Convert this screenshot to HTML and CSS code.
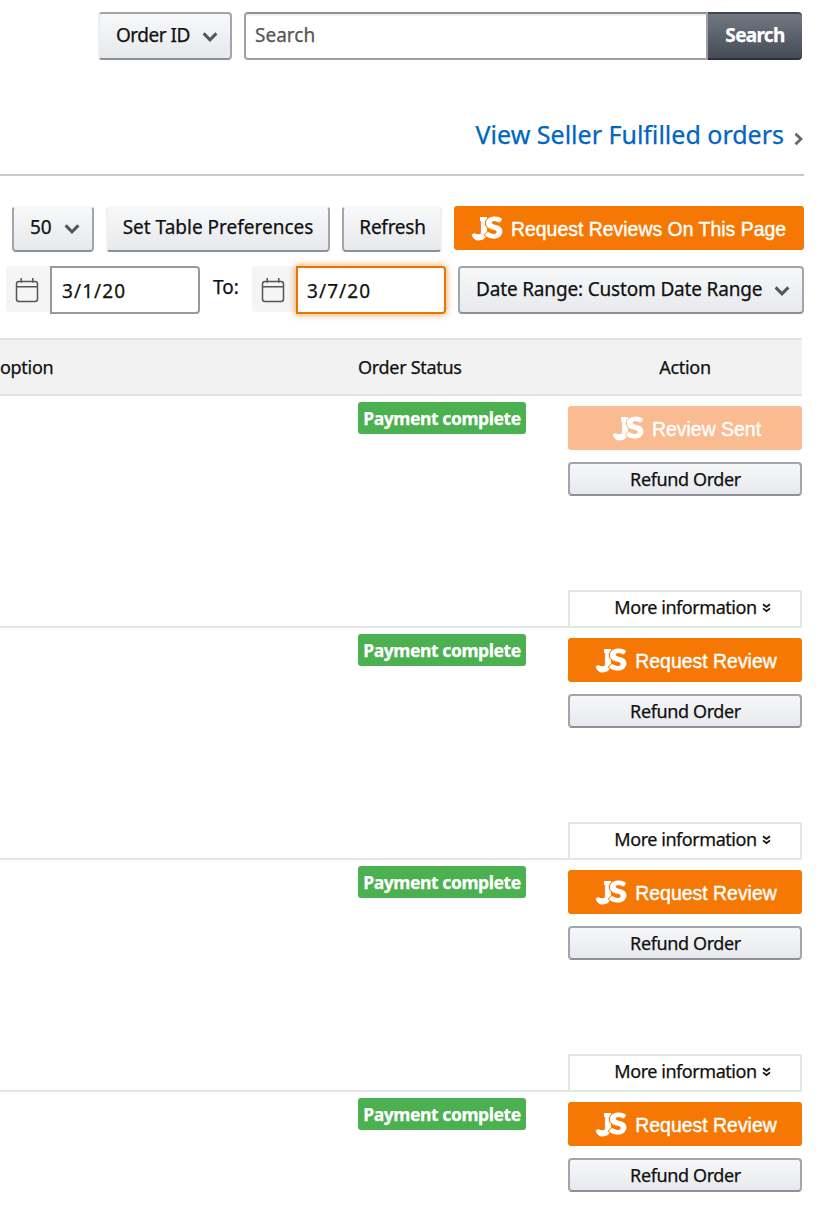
FILE: index.html
```html
<!DOCTYPE html>
<html lang="en">
<head>
<meta charset="utf-8">
<title>Manage Orders</title>
<link rel="stylesheet" href="styles.css">
</head>
<body>
<svg class="defs" width="0" height="0" aria-hidden="true">
  <symbol id="chevron" viewBox="0 0 16 12"><path d="M1.6 2.4 8 8.8l6.4-6.4" fill="none" stroke="#555" stroke-width="3"/></symbol>
  <symbol id="calendar" viewBox="0 0 24 26"><path d="M4 4.5h16q2.500 0 2.500 2.500v15q0 2.500-2.500 2.500H4q-2.500 0-2.500-2.500V7Q1.500 4.500 4 4.500zM1.500 9.700h21M6.200 1v4.800M17.800 1v4.800" fill="none" stroke="#555" stroke-width="1.500"/></symbol>
  <symbol id="tail" viewBox="0 0 32 26"><path d="M9 1h7v4H9zM.5 18.500l3-1.500q3 2.500 6.500.8l5.500.2q-1.500 6.500-8 6.500-5 0-7-6z" fill="#fff"/></symbol>
</svg>
<main class="page">
  <form class="search">
    <button type="button" class="btn btn-type"><span class="t-type">Order ID</span><svg class="chev"><use href="#chevron"/></svg></button>
    <div class="search-box"><div class="search-input"><span class="t-input">Search</span></div><button type="button" class="search-go"><span class="t-go">Search</span></button></div>
  </form>
  <div class="link-row"><a class="t-link">View Seller Fulfilled orders</a><svg class="arrow" viewBox="0 0 10 14"><path d="M1.500 1.800 7 7l-5.500 5.200" fill="none" stroke="#666" stroke-width="2.800"/></svg></div>
  <div class="tools">
    <button class="btn btn-count"><span class="t-count">50</span><svg class="chev"><use href="#chevron"/></svg></button>
    <button class="btn btn-prefs"><span class="t-prefs">Set Table Preferences</span></button>
    <button class="btn btn-refresh"><span class="t-refresh">Refresh</span></button>
    <button class="js-btn js-wide"><svg class="logo" viewBox="0 0 32 26"><use href="#tail"/><text class="mark-j" x="5" y="22.500">J</text><text class="mark-s" transform="translate(14 22) scale(1.120 1)">S</text></svg><span class="t-js">Request Reviews On This Page</span></button>
  </div>
  <div class="dates">
    <div class="cal"><svg><use href="#calendar"/></svg></div><div class="date"><span class="t-date">3/1/20</span></div>
    <span class="to">To:</span>
    <div class="cal"><svg><use href="#calendar"/></svg></div><div class="date focus"><span class="t-date">3/7/20</span></div>
    <button class="btn btn-range"><span class="t-range">Date Range: Custom Date Range</span><svg class="chev"><use href="#chevron"/></svg></button>
  </div>
  <section class="table">
    <div class="thead"><div class="c-opt"><span class="t-head">option</span></div><div class="c-status"><span class="t-head">Order Status</span></div><div class="c-action"><span class="t-head">Action</span></div></div>
    <div class="row"><div class="c-opt"></div><div class="c-status"><span class="badge"><span class="t-badge">Payment complete</span></span></div><div class="c-action"><button class="js-btn sent"><svg class="logo" viewBox="0 0 32 26"><use href="#tail"/><text class="mark-j" x="5" y="22.500">J</text><text class="mark-s" transform="translate(14 22) scale(1.120 1)">S</text></svg><span class="t-js">Review Sent</span></button><button class="btn refund"><span class="t-refund">Refund Order</span></button><div class="more"><span class="t-more">More information</span><svg class="dbl" viewBox="0 0 9 10"><path d="M1 1.200 4.500 3.900 8 1.200M1 5.400l3.500 2.700L8 5.400" fill="none" stroke="#111" stroke-width="1.800"/></svg></div></div></div>
    <div class="row"><div class="c-opt"></div><div class="c-status"><span class="badge"><span class="t-badge">Payment complete</span></span></div><div class="c-action"><button class="js-btn"><svg class="logo" viewBox="0 0 32 26"><use href="#tail"/><text class="mark-j" x="5" y="22.500">J</text><text class="mark-s" transform="translate(14 22) scale(1.120 1)">S</text></svg><span class="t-js">Request Review</span></button><button class="btn refund"><span class="t-refund">Refund Order</span></button><div class="more"><span class="t-more">More information</span><svg class="dbl" viewBox="0 0 9 10"><path d="M1 1.200 4.500 3.900 8 1.200M1 5.400l3.500 2.700L8 5.400" fill="none" stroke="#111" stroke-width="1.800"/></svg></div></div></div>
    <div class="row"><div class="c-opt"></div><div class="c-status"><span class="badge"><span class="t-badge">Payment complete</span></span></div><div class="c-action"><button class="js-btn"><svg class="logo" viewBox="0 0 32 26"><use href="#tail"/><text class="mark-j" x="5" y="22.500">J</text><text class="mark-s" transform="translate(14 22) scale(1.120 1)">S</text></svg><span class="t-js">Request Review</span></button><button class="btn refund"><span class="t-refund">Refund Order</span></button><div class="more"><span class="t-more">More information</span><svg class="dbl" viewBox="0 0 9 10"><path d="M1 1.200 4.500 3.900 8 1.200M1 5.400l3.500 2.700L8 5.400" fill="none" stroke="#111" stroke-width="1.800"/></svg></div></div></div>
    <div class="row last"><div class="c-opt"></div><div class="c-status"><span class="badge"><span class="t-badge">Payment complete</span></span></div><div class="c-action"><button class="js-btn"><svg class="logo" viewBox="0 0 32 26"><use href="#tail"/><text class="mark-j" x="5" y="22.500">J</text><text class="mark-s" transform="translate(14 22) scale(1.120 1)">S</text></svg><span class="t-js">Request Review</span></button><button class="btn refund"><span class="t-refund">Refund Order</span></button></div></div>
  </section>
</main>
</body>
</html>
```
FILE: styles.css
```css
* { box-sizing: border-box; }
body { margin: 0; background: #fff; color: #111; font: 19px/24px "Noto Sans", sans-serif; -webkit-text-stroke: .25px currentColor; }
span, a { white-space: nowrap; }
.defs { display: block; height: 0; }
.page { width: 830px; height: 1232px; overflow: hidden; padding-top: 12px; }
button { font: inherit; color: inherit; margin: 0; padding: 0; border: 0; display: flex; align-items: center; flex: none; }
svg { flex: none; }

.btn { border: 2px solid #a2a6ac; border-bottom-color: #8d9096; border-radius: 4px; background: linear-gradient(#f7f8fa, #e7e9ec); }
.chev { width: 16px; height: 12px; }

.t-type { letter-spacing: -.5px; }
.t-go { letter-spacing: -.7px; }
.t-refresh { letter-spacing: -.25px; padding-left: 1px; }
.t-range { letter-spacing: -.17px; }
.t-date { letter-spacing: 1.1px; }
.t-head { letter-spacing: -.3px; }
.t-badge { font-size: 17.5px; letter-spacing: -.42px; }
.t-refund { letter-spacing: -.38px; padding-left: 1px; }
.t-more { letter-spacing: -.45px; }
.t-js { padding-top: 2px; }

.search { display: flex; gap: 12px; height: 48px; padding-left: 98px; }
.btn-type { width: 134px; padding: 0 12px 2px 16px; justify-content: space-between; border-left-color: #eceef1; }
.btn-type .chev { margin-top: 4px; }
.search-box { display: flex; width: 558px; }
.search-input { width: 464px; border: 2px solid #a0a0a0; border-top-color: #919191; border-radius: 4px 0 0 4px; box-shadow: inset 0 2px 1px #f0f0f0; padding: 9px 0 0 9px; color: #555; }
.search-go { width: 94px; justify-content: center; padding-bottom: 2px; color: #fff; font-weight: 700; border: 2px solid #3d444e; border-top-color: #3f4550; border-bottom-color: #2b303a; border-left: 0; border-right: 0; border-radius: 0 4px 4px 0; background: linear-gradient(#727882, #464c57); }

.link-row { display: flex; align-items: center; justify-content: flex-end; width: 804px; height: 116px; padding-top: 34px; border-bottom: 2px solid #c9c9c9; font-size: 25px; color: #0066c0; }
.arrow { width: 10px; height: 14px; margin: 10px 0 0 10px; }

.tools { display: flex; gap: 12px; height: 46px; margin-top: 30px; padding-left: 12px; }
.tools .btn { border-top-color: #f6f7f9; padding-bottom: 4px; }
.tools .btn-count { width: 82px; justify-content: space-between; padding: 0 12px 4px 16px; }
.btn-count .chev { margin-top: 4px; }
.tools .btn-prefs { width: 224px; justify-content: center; border-left-color: #f0f1f3; }
.tools .btn-refresh { width: 100px; justify-content: center; border-right-color: #eceef0; }

.js-btn { height: 44px; width: 234px; padding-left: 3px; justify-content: center; border-radius: 3px; background: #f67804; color: #fff; font: 19.45px/24px "Liberation Sans", sans-serif; -webkit-text-stroke: .4px #fff; --ground: #f67804; }
.js-wide { width: 350px; padding-left: 0; }
.sent { background: #fbbb90; --ground: #fbbb90; padding-left: 4px; }
.logo { width: 32px; height: 26px; margin: 1px 8px 0 -1px; font: 900 28px Lato, sans-serif; overflow: visible; }
.mark-j, .mark-s { fill: #fff; stroke: #fff; }
.mark-j { stroke-width: 1.5px; -webkit-text-stroke: 1.5px #fff; }
/* a thin line of the button's colour parts the S from the J */
.mark-s { -webkit-text-stroke: 1.3px #fff; font-size: 29px; filter: drop-shadow(-.7px 0 0 var(--ground)); }

.dates { display: flex; height: 48px; margin-top: 14px; padding-left: 6px; }
.cal { width: 44px; height: 46px; padding: 11px 0 0 9px; background: #f5f5f5; border-radius: 4px 0 0 4px; }
.cal svg { width: 24px; height: 26px; display: block; }
.date { width: 150px; border: 2px solid #999; border-radius: 0 4px 4px 0; background: #fff; padding: 11px 0 0 10px; }
.focus { border-color: #e77600; box-shadow: 0 0 6px 1px rgba(228,121,17,.6); padding-left: 9px; }
.to { width: 52px; padding: 9px 0 0 13px; }
.btn-range { width: 346px; margin-left: 12px; justify-content: space-between; padding: 0 12px 2px 16px; }
.btn-range .chev { margin-top: 4px; }

.table { width: 802px; margin-top: 24px; font-size: 18px; }
.thead, .row { display: flex; }
.thead { height: 58px; align-items: center; background: #f2f2f2; border: solid #e2e2e2; border-width: 2px 0; }
.c-opt { width: 358px; }
.c-status { width: 210px; }
.c-action { width: 234px; }
.thead .c-action { text-align: center; }
.row { height: 232px; border-bottom: 2px solid #e5e6e6; }
.last { border-bottom: 0; }
.row .c-status { padding-top: 6px; }
.badge { display: flex; align-items: center; justify-content: center; width: 168px; height: 32px; border-radius: 3px; background: #4bb050; color: #fff; font-weight: 700; }
.row .c-action { display: flex; flex-direction: column; padding-top: 10px; height: 232px; }
.refund { width: 234px; height: 34px; margin-top: 12px; justify-content: center; }
.more { display: flex; align-items: center; justify-content: center; gap: 5px; height: 38px; margin-top: auto; padding: 0 0 4px 15px; border: 2px solid #e5e6e6; }
.dbl { width: 9px; height: 10px; margin-top: 2px; }
```
